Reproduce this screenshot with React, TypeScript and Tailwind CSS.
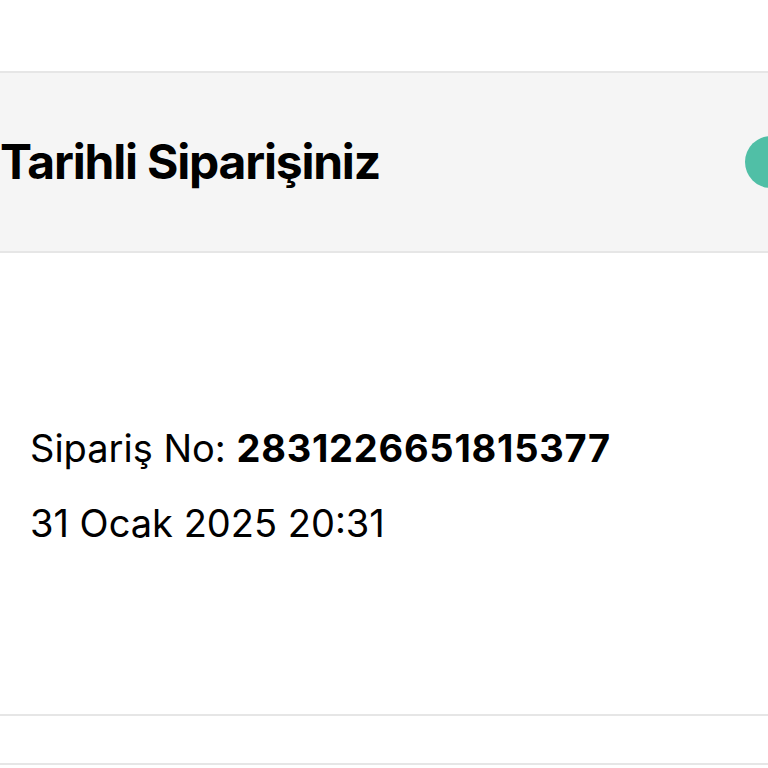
export default function App() {
  return (
    <div className="min-h-[768px] w-[768px] overflow-hidden bg-white font-['Inter',sans-serif] text-black">
      <div className="h-[71px]" />

      {/* header band */}
      <div className="relative flex h-[182px] items-center overflow-hidden border-y-2 border-[#e6e6e6] bg-[#f5f5f5]">
        <h2 className="whitespace-nowrap text-[48px] font-bold leading-none tracking-[-0.025em]">
          Tarihli Siparişiniz
        </h2>
        <span className="absolute left-[745px] top-[63px] h-[52px] w-[52px] rounded-full bg-[#50bfa6]" />
      </div>

      {/* order info */}
      <div className="flex h-[461px] flex-col justify-center gap-[37px] px-[30px] pt-[4px]">
        <p className="text-[38px] leading-none">
          Sipariş No:{" "}
          <span className="font-bold tracking-[0.02em]">2831226651815377</span>
        </p>
        <p className="text-[38px] leading-none">31 Ocak 2025 20:31</p>
      </div>

      <div className="h-[2px] bg-[#e6e6e6]" />
      <div className="h-[47px]" />
      <div className="h-[2px] bg-[#e6e6e6]" />
    </div>
  );
}
